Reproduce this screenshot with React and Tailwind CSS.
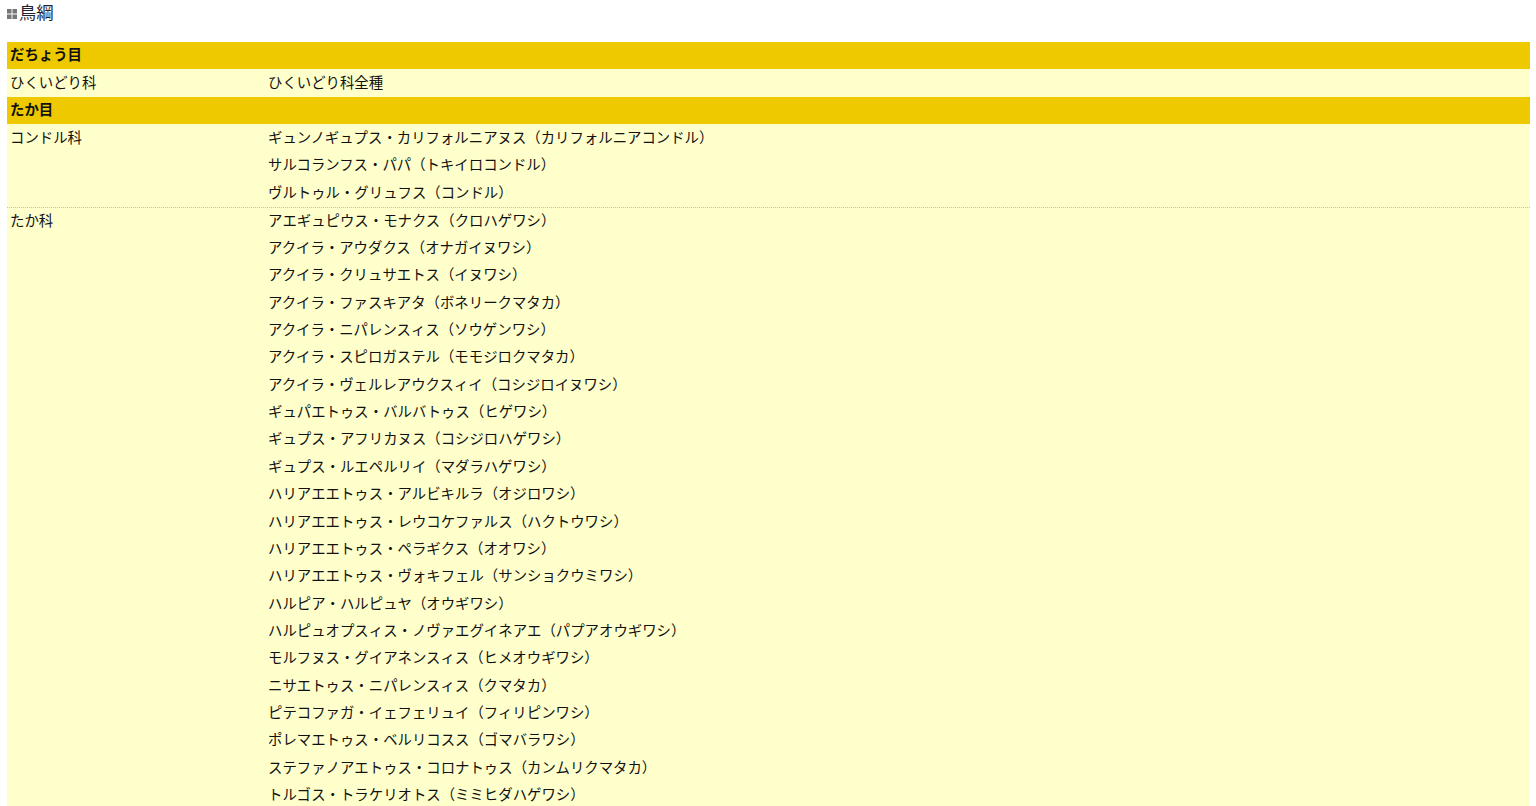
const orders = [
  {
    name: 'だちょう目',
    families: [{ name: 'ひくいどり科', species: ['ひくいどり科全種'] }],
  },
  {
    name: 'たか目',
    families: [
      {
        name: 'コンドル科',
        species: [
          'ギュンノギュプス・カリフォルニアヌス（カリフォルニアコンドル）',
          'サルコランフス・パパ（トキイロコンドル）',
          'ヴルトゥル・グリュフス（コンドル）',
        ],
      },
      {
        name: 'たか科',
        species: [
          'アエギュピウス・モナクス（クロハゲワシ）',
          'アクイラ・アウダクス（オナガイヌワシ）',
          'アクイラ・クリュサエトス（イヌワシ）',
          'アクイラ・ファスキアタ（ボネリークマタカ）',
          'アクイラ・ニパレンスィス（ソウゲンワシ）',
          'アクイラ・スピロガステル（モモジロクマタカ）',
          'アクイラ・ヴェルレアウクスィイ（コシジロイヌワシ）',
          'ギュパエトゥス・バルバトゥス（ヒゲワシ）',
          'ギュプス・アフリカヌス（コシジロハゲワシ）',
          'ギュプス・ルエペルリイ（マダラハゲワシ）',
          'ハリアエエトゥス・アルビキルラ（オジロワシ）',
          'ハリアエエトゥス・レウコケファルス（ハクトウワシ）',
          'ハリアエエトゥス・ペラギクス（オオワシ）',
          'ハリアエエトゥス・ヴォキフェル（サンショクウミワシ）',
          'ハルピア・ハルピュヤ（オウギワシ）',
          'ハルピュオプスィス・ノヴァエグイネアエ（パプアオウギワシ）',
          'モルフヌス・グイアネンスィス（ヒメオウギワシ）',
          'ニサエトゥス・ニパレンスィス（クマタカ）',
          'ピテコファガ・イェフェリュイ（フィリピンワシ）',
          'ポレマエトゥス・ベルリコスス（ゴマバラワシ）',
          'ステファノアエトゥス・コロナトゥス（カンムリクマタカ）',
          'トルゴス・トラケリオトス（ミミヒダハゲワシ）',
        ],
      },
    ],
  },
];

function FamilyRow({ family, divider }) {
  // first family in an order sits a touch lower inside its fixed-height lines
  const line = divider ? 'h-[27.36px]' : 'h-[27.36px] leading-[28.6px]';
  return (
    <div className={`flex ${divider ? 'mt-[0.4px] border-t border-dotted border-[#e8c830]' : ''}`}>
      <div className={`w-[261px] shrink-0 pl-[3px] ${line}`}>{family.name}</div>
      <div className="flex-1">
        {family.species.map((s) => (
          <div key={s} className={line}>{s}</div>
        ))}
      </div>
    </div>
  );
}

export default function App() {
  return (
    <div className="h-[806px] overflow-hidden bg-white text-[14.4px] leading-[27.36px] text-[#111] font-['Liberation_Sans','Noto_Sans_CJK_JP',sans-serif]">
      <h2 className="flex items-center h-[28px] pl-[7px] text-[17.3px] font-normal text-[#1f2430]">
        <svg className="mr-[2px]" width="10" height="10" viewBox="0 0 10 10">
          <rect x="0" y="0" width="4.5" height="4.5" fill="#777" />
          <rect x="5.5" y="0" width="4.5" height="4.5" fill="#777" />
          <rect x="0" y="5.5" width="4.5" height="4.5" fill="#777" />
          <rect x="5.5" y="5.5" width="4.5" height="4.5" fill="#777" />
        </svg>
        鳥綱
      </h2>

      {/* Species table */}
      <div className="mt-[14px] ml-[7px] w-[1523px] bg-[#ffffcc]">
        {orders.map((order) => (
          <div key={order.name}>
            <div className="bg-[#eec900] pl-[3px] font-bold">{order.name}</div>
            {order.families.map((family, i) => (
              <FamilyRow key={family.name} family={family} divider={i > 0} />
            ))}
          </div>
        ))}
      </div>
    </div>
  );
}
